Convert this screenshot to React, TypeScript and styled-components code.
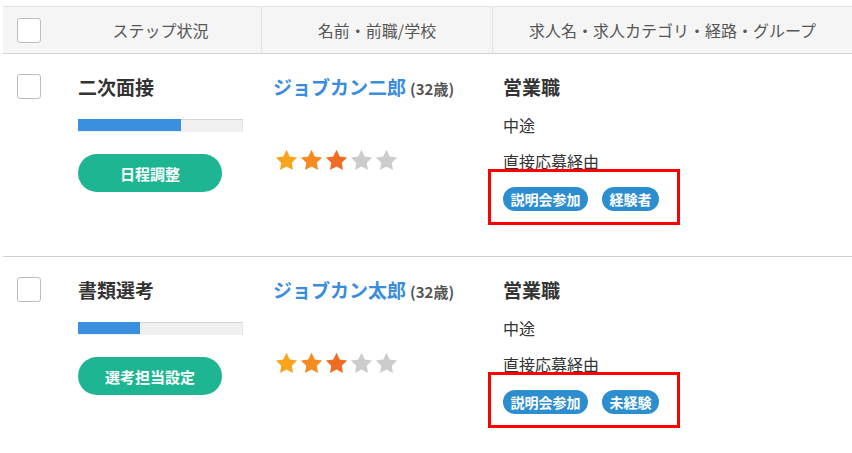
import React from "react";
import styled, { createGlobalStyle } from "styled-components";

const Global = createGlobalStyle`
  html, body { margin: 0; padding: 0; background: #fff; }
  body { font-family: "Noto Sans CJK JP", "Noto Sans", sans-serif; color: #333; }
`;

const Page = styled.div`
  width: 852px;
  height: 453px;
  overflow: hidden;
  padding: 6px 0 0 3px;
  box-sizing: border-box;
`;

const cols = "57px 201px 231px 1fr";

const Header = styled.div`
  display: grid;
  grid-template-columns: ${cols};
  height: 48px;
  background: #f6f5f6;
  border-top: 1px solid #e2e2e2;
  border-bottom: 1px solid #d6d6d6;
  box-sizing: border-box;
`;

const HeadCell = styled.div<{ $divider?: boolean }>`
  display: flex;
  align-items: center;
  justify-content: center;
  font-size: 16px;
  color: #555;
  border-left: ${(p) => (p.$divider ? "1px solid #e3e3e3" : "none")};
`;

const CheckCell = styled.div`
  display: flex;
  align-items: flex-start;
  padding-left: 14px;
`;

const HeadCheckCell = styled(CheckCell)`
  align-items: center;
`;

const Checkbox = styled.span`
  display: block;
  width: 24px;
  height: 25px;
  border: 1px solid #bdbdbd;
  border-radius: 3px;
  background: #fff;
  box-sizing: border-box;
`;

const Row = styled.div<{ $last?: boolean }>`
  display: grid;
  grid-template-columns: ${cols};
  padding: 20px 0 45px;
  border-bottom: ${(p) => (p.$last ? "none" : "1px solid #cfcfcf")};
`;

const StepCell = styled.div`
  display: flex;
  flex-direction: column;
  align-items: flex-start;
  padding-left: 18px;
`;

const StepTitle = styled.div`
  font-size: 19px;
  font-weight: 700;
  line-height: 26px;
  color: #333;
`;

const Progress = styled.div`
  margin-top: 19px;
  width: 165px;
  height: 13px;
  background: #f1f0f1;
  border-top: 1px solid #d4d4d4;
  border-right: 1px solid #e4e4e4;
  box-sizing: border-box;
  display: flex;
`;

const ProgressFill = styled.div`
  height: 12px;
  margin-top: -1px;
  background: #3a8fdf;
`;

const ActionButton = styled.button`
  margin-top: 22px;
  width: 144px;
  height: 38px;
  border: none;
  border-radius: 19px;
  background: #1eb592;
  color: #fff;
  font-family: inherit;
  font-size: 15px;
  font-weight: 700;
  padding: 0;
`;

const NameCell = styled.div`
  display: flex;
  flex-direction: column;
  padding-left: 12px;
`;

const NameLine = styled.div`
  line-height: 26px;
  display: flex;
  align-items: baseline;
  gap: 4px;
`;

const Name = styled.span`
  font-size: 19px;
  font-weight: 700;
  color: #3a8ddc;
`;

const Age = styled.span`
  font-size: 15px;
  font-weight: 700;
  color: #555;
`;

const Stars = styled.div`
  margin-top: 47px;
  display: flex;
  gap: 2px;
  padding-left: 2px;
`;

const JobCell = styled.div`
  display: flex;
  flex-direction: column;
  align-items: flex-start;
  padding-left: 11px;
`;

const JobTitle = styled.div`
  font-size: 19px;
  font-weight: 700;
  line-height: 26px;
  color: #333;
`;

const JobLine = styled.div`
  margin-top: 14px;
  font-size: 16px;
  line-height: 22px;
  color: #333;
`;

const TagGroup = styled.div`
  position: relative;
  margin-top: 15px;
  display: flex;
  gap: 14px;
`;

const Highlight = styled.span`
  position: absolute;
  left: -15px;
  top: -18px;
  width: 192px;
  height: 56px;
  border: 3px solid #f00;
  box-sizing: border-box;
  pointer-events: none;
`;

const Tag = styled.span`
  display: inline-flex;
  align-items: center;
  height: 24px;
  padding: 0 7.5px;
  border-radius: 12px;
  background: #2d8ecf;
  color: #fff;
  font-size: 14px;
  font-weight: 700;
`;

const starColors = ["#f8a41d", "#f48a20", "#f06c24"];

function Star({ color }: { color: string }) {
  return (
    <svg width="23" height="22" viewBox="0 0 24 23">
      <path
        d="M12 0.8l3.4 7 7.7 1.1-5.6 5.4 1.3 7.7L12 18.3 5.2 22l1.3-7.7L0.9 8.9l7.7-1.1z"
        fill={color}
      />
    </svg>
  );
}

type Item = {
  step: string;
  progress: number;
  action: string;
  name: string;
  tags: string[];
};

const items: Item[] = [
  { step: "二次面接", progress: 63, action: "日程調整", name: "ジョブカン二郎", tags: ["説明会参加", "経験者"] },
  { step: "書類選考", progress: 37.5, action: "選考担当設定", name: "ジョブカン太郎", tags: ["説明会参加", "未経験"] },
];

export default function App() {
  return (
    <Page>
      <Global />
      <Header>
        <HeadCheckCell>
          <Checkbox />
        </HeadCheckCell>
        <HeadCell>ステップ状況</HeadCell>
        <HeadCell $divider>名前・前職/学校</HeadCell>
        <HeadCell $divider>求人名・求人カテゴリ・経路・グループ</HeadCell>
      </Header>
      {items.map((it, i) => (
        <Row key={i} $last={i === items.length - 1}>
          <CheckCell>
            <Checkbox />
          </CheckCell>
          <StepCell>
            <StepTitle>{it.step}</StepTitle>
            <Progress>
              <ProgressFill style={{ width: `${it.progress}%` }} />
            </Progress>
            <ActionButton>{it.action}</ActionButton>
          </StepCell>
          <NameCell>
            <NameLine>
              <Name>{it.name}</Name>
              <Age>(32歳)</Age>
            </NameLine>
            <Stars>
              {[0, 1, 2, 3, 4].map((s) => (
                <Star key={s} color={s < 3 ? starColors[s] : "#cccccc"} />
              ))}
            </Stars>
          </NameCell>
          <JobCell>
            <JobTitle>営業職</JobTitle>
            <JobLine>中途</JobLine>
            <JobLine>直接応募経由</JobLine>
            <TagGroup>
              <Highlight />
              {it.tags.map((t) => (
                <Tag key={t}>{t}</Tag>
              ))}
            </TagGroup>
          </JobCell>
        </Row>
      ))}
    </Page>
  );
}
